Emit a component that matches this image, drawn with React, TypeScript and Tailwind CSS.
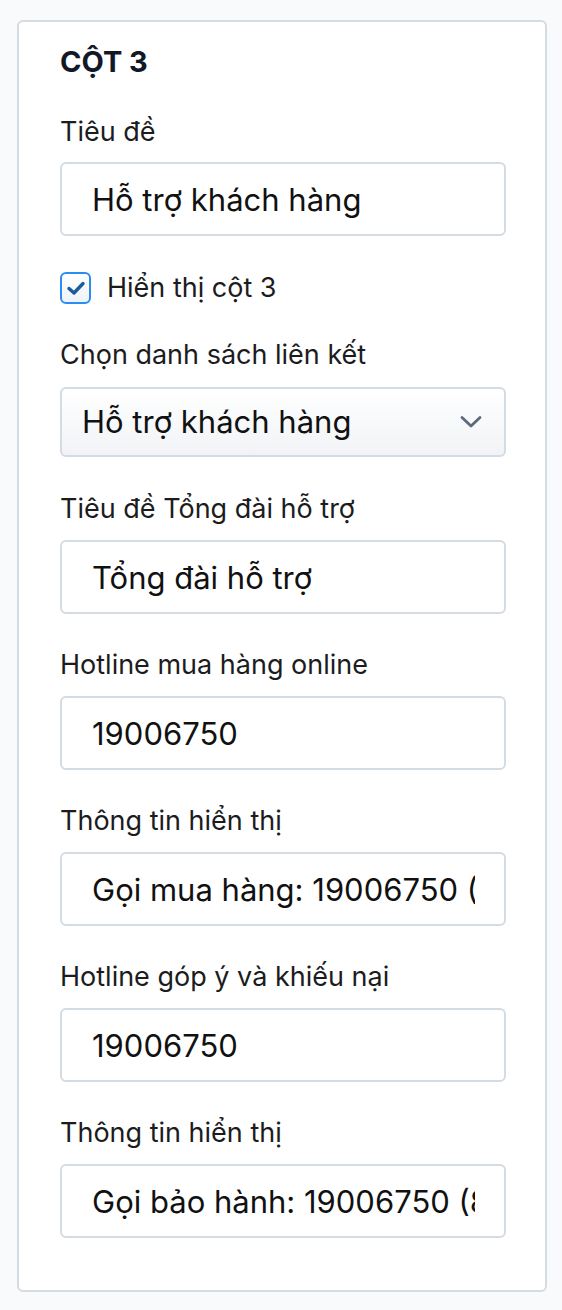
import React from 'react';

const fields = [
  { label: 'Tiêu đề Tổng đài hỗ trợ', value: 'Tổng đài hỗ trợ' },
  { label: 'Hotline mua hàng online', value: '19006750' },
  { label: 'Thông tin hiển thị', value: 'Gọi mua hàng: 19006750 (8:00 - 21:30)' },
  { label: 'Hotline góp ý và khiếu nại', value: '19006750' },
  { label: 'Thông tin hiển thị', value: 'Gọi bảo hành: 19006750 (8:00 - 21:00)' },
];

function Label({ children, className = '' }: { children: React.ReactNode; className?: string }) {
  return (
    <label className={`block text-[27px] leading-[32px] text-[#1c1c1e] ${className}`}>{children}</label>
  );
}

function TextInput({ value }: { value: string }) {
  return (
    <input
      type="text"
      defaultValue={value}
      className="block w-full h-[74px] rounded-[6px] border-2 border-[#d3dbe3] bg-white pl-[30px] pr-[29px] text-[31px] text-[#111111] outline-none"
    />
  );
}

export default function App() {
  return (
    <div className="min-h-[1310px] bg-[#f8fafc] pt-[20px] pb-[19px] pl-[17px]" style={{ fontFamily: 'Inter, "Noto Sans", sans-serif' }}>
      <div className="w-[530px] rounded-[6px] border-2 border-[#d3dbe3] bg-white pl-[41px] pr-[39px] pt-[22px] pb-[52px]">
        <h2 className="text-[29px] leading-[36px] font-bold text-[#111827]">CỘT 3</h2>

        {/* Tiêu đề */}
        <Label className="mt-[36px] mb-[14px]">Tiêu đề</Label>
        <TextInput value="Hỗ trợ khách hàng" />

        {/* Checkbox */}
        <div className="mt-[36px] flex items-center gap-[16px]">
          <span className="flex h-[32px] w-[31px] items-center justify-center rounded-[6px] border-2 border-[#2b8cf2] bg-gradient-to-b from-white to-[#eef3f8]">
            <svg width="20" height="16" viewBox="0 0 20 16" fill="none">
              <path d="M3 8.5 L8 13 L17 3.5" stroke="#1d5c9c" strokeWidth="3.4" strokeLinecap="round" strokeLinejoin="round" />
            </svg>
          </span>
          <span className="text-[27px] leading-[32px] text-[#1c1c1e]">Hiển thị cột 3</span>
        </div>

        {/* Select */}
        <Label className="mt-[35px] mb-[16px]">Chọn danh sách liên kết</Label>
        <div className="flex h-[70px] items-center justify-between rounded-[6px] border-2 border-[#d3dbe3] bg-gradient-to-b from-white to-[#f1f3f6] pl-[20px] pr-[22px]">
          <span className="text-[31px] text-[#111111]">Hỗ trợ khách hàng</span>
          <svg width="22" height="14" viewBox="0 0 22 14" fill="none">
            <path d="M2 2.5 L11 11 L20 2.5" stroke="#5b6b7c" strokeWidth="2.8" strokeLinecap="round" strokeLinejoin="round" />
          </svg>
        </div>

        {fields.map((f, i) => (
          <div key={i}>
            <Label className={`${i === 0 ? 'mt-[36px]' : 'mt-[35px]'} mb-[15px]`}>{f.label}</Label>
            <TextInput value={f.value} />
          </div>
        ))}
      </div>
    </div>
  );
}
